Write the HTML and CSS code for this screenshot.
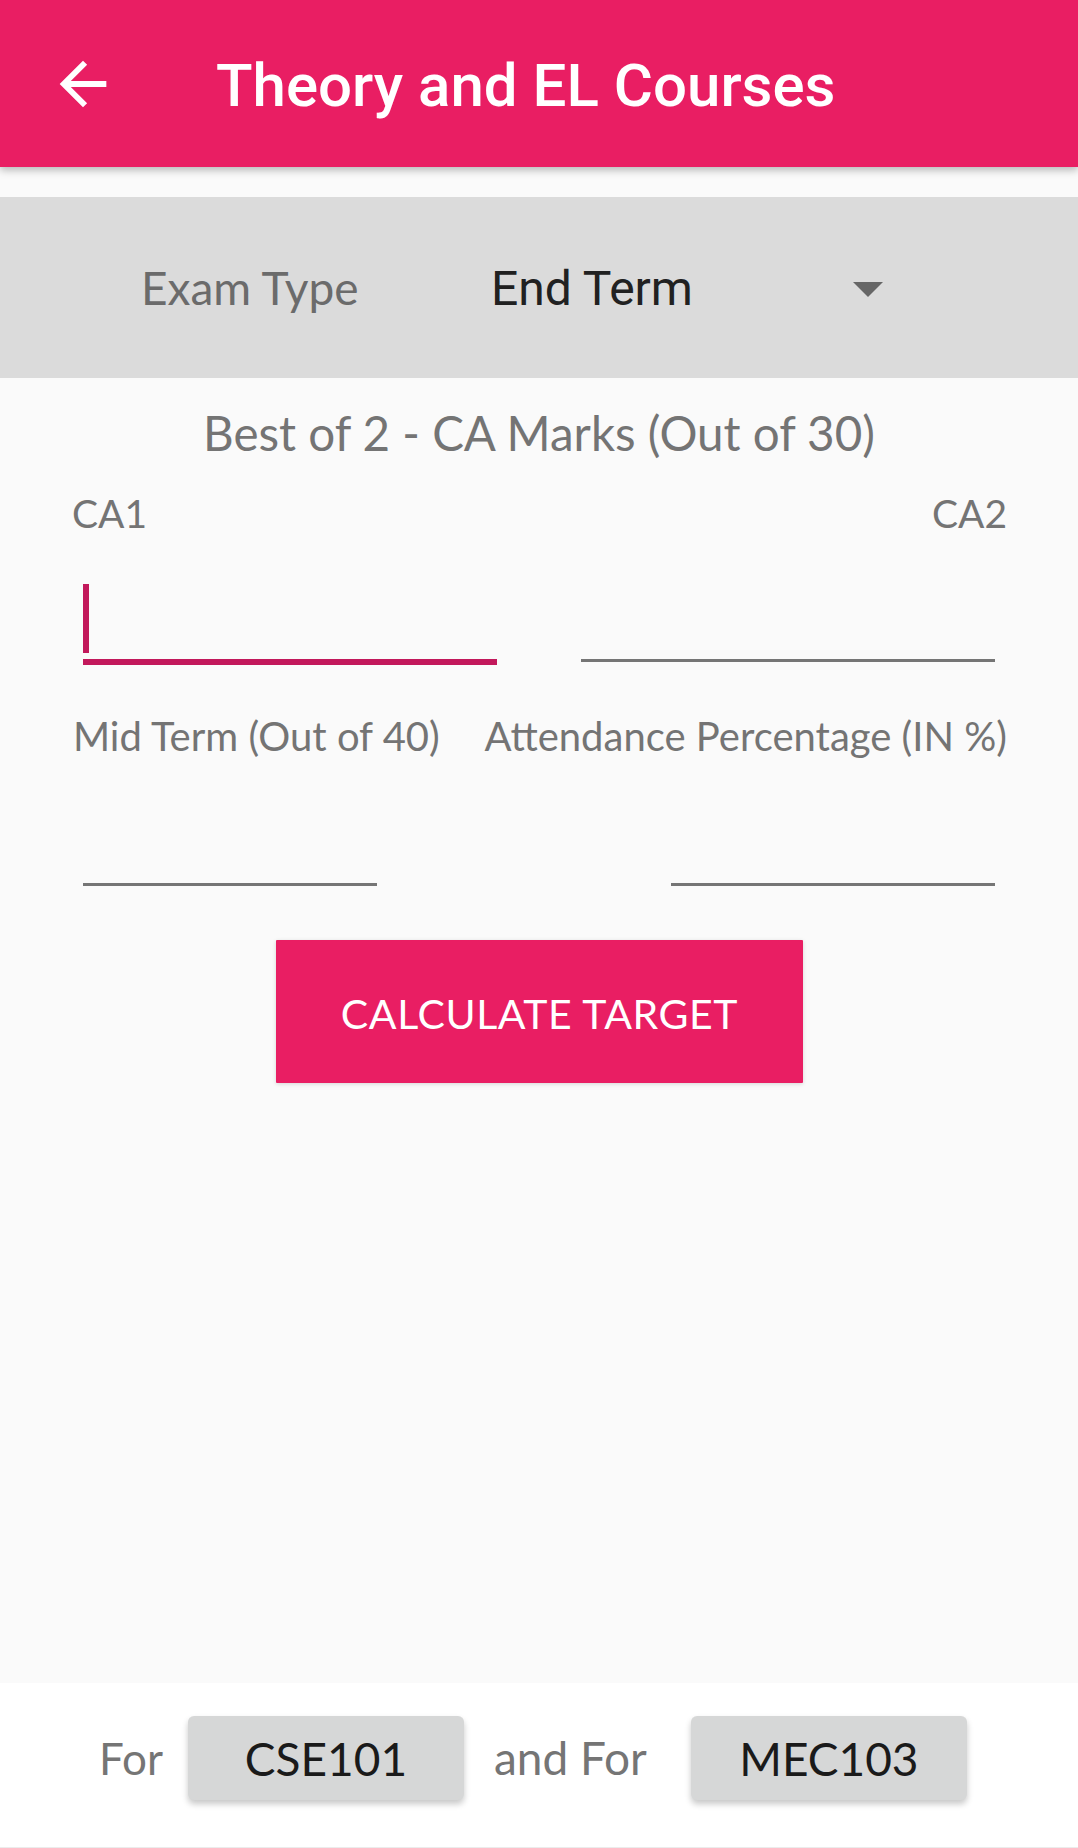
FILE: index.html
```html
<!DOCTYPE html>
<html lang="en">
<head>
<meta charset="utf-8">
<title>Theory and EL Courses</title>
<link rel="stylesheet" href="styles.css">
</head>
<body>
<header class="appbar">
  <svg class="back" viewBox="0 0 24 24" aria-hidden="true"><path d="M20 11H7.83l5.59-5.59L12 4l-8 8 8 8 1.41-1.41L7.83 13H20v-2z"/></svg>
  <h1 class="title">Theory and EL Courses</h1>
</header>
<main class="content">
  <section class="spinner">
    <span class="spinner-label">Exam Type</span>
    <span class="spinner-value">End Term</span>
    <span class="caret"></span>
  </section>
  <h2 class="section-title">Best of 2 - CA Marks (Out of 30)</h2>
  <div class="label-row">
    <span class="label">CA1</span>
    <span class="label">CA2</span>
  </div>
  <div class="input-row">
    <div class="field ca focused"><span class="cursor"></span></div>
    <div class="field ca"></div>
  </div>
  <div class="label-row second">
    <span class="label">Mid Term (Out of 40)</span>
    <span class="label">Attendance Percentage (IN %)</span>
  </div>
  <div class="input-row second">
    <div class="field mid"></div>
    <div class="field att"></div>
  </div>
  <div class="action">
    <button class="calc">CALCULATE TARGET</button>
  </div>
</main>
<footer class="bottom">
  <span class="for">For</span>
  <button class="course">CSE101</button>
  <span class="for and">and For</span>
  <button class="course">MEC103</button>
</footer>
</body>
</html>
```
FILE: styles.css
```css
* { box-sizing: border-box; }
html, body { margin: 0; padding: 0; }
body {
  width: 1078px;
  height: 1848px;
  background: #fafafa;
  display: flex;
  flex-direction: column;
  font-family: Lato, "Noto Sans", sans-serif;
  overflow: hidden;
}
.appbar {
  height: 167px;
  flex: none;
  background: #e91e63;
  display: flex;
  align-items: center;
  padding-left: 48px;
  box-shadow: 0 3px 8px rgba(0,0,0,0.28);
  position: relative;
  z-index: 2;
}
.back { width: 70px; height: 70px; fill: #fff; flex: none; }
.title {
  margin: 0 0 0 98px;
  padding-top: 6px;
  font-family: Roboto, "Noto Sans", sans-serif;
  font-weight: 500;
  font-size: 60px;
  line-height: 1.172;
  color: #fff;
}
.content { flex: 1; display: flex; flex-direction: column; }
.spinner {
  margin-top: 30px;
  height: 181px;
  background: #dbdbdb;
  display: flex;
  align-items: center;
  padding-left: 141px;
}
.spinner-label {
  font-size: 46px;
  line-height: 1.2;
  color: #6b6b6b;
  width: 350px;
}
.spinner-value {
  font-family: Roboto, "Noto Sans", sans-serif;
  font-size: 48px;
  line-height: 1.172;
  color: #212121;
  width: 362px;
  padding-top: 3px;
}
.caret {
  width: 0; height: 0;
  border-left: 15px solid transparent;
  border-right: 15px solid transparent;
  border-top: 15px solid #666;
  margin-top: 4px;
}
.section-title {
  margin: 26px 0 0;
  text-align: center;
  font-weight: 400;
  font-size: 47.5px;
  line-height: 1.2;
  color: #747474;
}
.label-row {
  display: flex;
  justify-content: space-between;
  padding: 0 71px 0 72px;
  margin-top: 29px;
}
.label-row.second { margin-top: 47px; padding-left: 73px; }
.label {
  font-size: 39px;
  line-height: 1.2;
  color: #747474;
}
.label-row.second .label { font-size: 40px; }
.input-row {
  display: flex;
  justify-content: space-between;
  align-items: flex-start;
  padding: 0 83px;
}
.field {
  border-bottom: 3px solid #757575;
}
.field.ca { width: 414px; height: 125px; }
.field.ca.focused {
  height: 128px;
  border-bottom: 6px solid #c2185b;
  display: flex;
  align-items: flex-end;
  padding-bottom: 6px;
}
.cursor { width: 6px; height: 69px; background: #c2185b; }
.field.mid { width: 294px; height: 126px; }
.field.att { width: 324px; height: 126px; }
.action { display: flex; justify-content: center; margin-top: 54px; padding-left: 1px; }
.calc {
  width: 527px;
  height: 143px;
  border: none;
  border-radius: 1px;
  background: #e91e63;
  color: #fff;
  font-family: Lato, "Noto Sans", sans-serif;
  font-size: 41px;
  letter-spacing: 0.6px;
  box-shadow: 0 1px 4px rgba(0,0,0,0.15);
  padding: 4px 0 0;
}
.bottom {
  height: 165px;
  flex: none;
  background: #fff;
  border-bottom: 1px solid #ececec;
  display: flex;
  align-items: flex-start;
  padding: 33px 0 0 99px;
}
.for {
  font-size: 44px;
  line-height: 84px;
  color: #757575;
}
.and { margin-left: 30px; font-size: 46px; }
.course {
  width: 276px;
  height: 84px;
  margin-left: 25px;
  border: none;
  border-radius: 6px;
  background: #d6d7d7;
  box-shadow: 0 4px 6px rgba(0,0,0,0.22);
  font-family: Lato, "Noto Sans", sans-serif;
  font-size: 46px;
  color: #1a1a1a;
  padding: 0;
}
.and + .course { margin-left: 44px; }
```
